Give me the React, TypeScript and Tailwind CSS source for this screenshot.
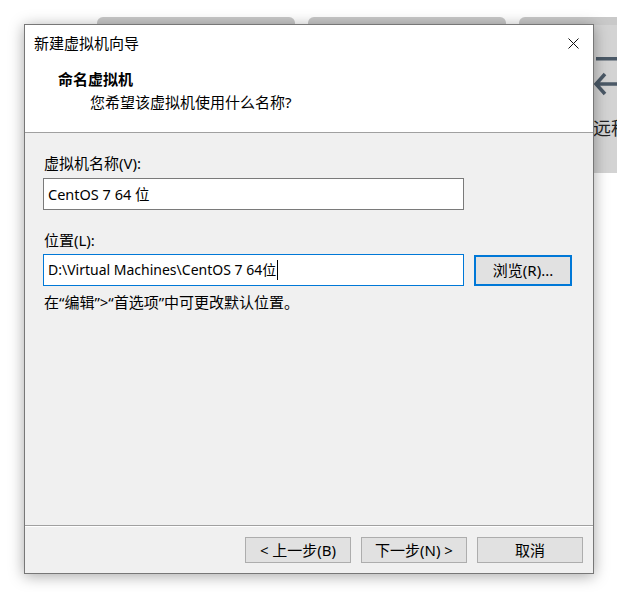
import React from "react";

const font = "font-['Noto_Sans','Noto_Sans_CJK_SC',sans-serif]";

function Btn({ children, className = "" }: { children: React.ReactNode; className?: string }) {
  return (
    <div
      className={`flex h-[26px] w-[106px] items-center justify-center border border-[#adadad] bg-[#e1e1e1] text-[15px] leading-none text-black ${className}`}
    >
      {children}
    </div>
  );
}

export default function App() {
  return (
    <div className={`relative h-[592px] w-[617px] overflow-hidden bg-white ${font}`}>
      {/* background app */}
      <div className="flex flex-col">
        <div className="flex gap-[13px] pl-[97px] pt-[17px]">
          <div className="h-[8px] w-[198px] shrink-0 rounded-t-[6px] bg-[#c9c9c9]" />
          <div className="h-[8px] w-[198px] shrink-0 rounded-t-[6px] bg-[#c9c9c9]" />
          <div className="h-[8px] w-[198px] shrink-0 rounded-t-[6px] bg-[#c9c9c9]" />
        </div>
        <div className="ml-auto flex h-[148px] w-[300px] flex-col items-end bg-[#d3d3d3]">
          <div className="flex w-[26px] flex-col pt-[24px]">
            <svg width="26" height="50" viewBox="0 0 26 50" className="text-[#4b5967]">
              <rect x="5" y="8" width="22" height="3.5" fill="currentColor" />
              <path d="M5 35 L26 35 M14 25 L5 35 L14 45" stroke="currentColor" strokeWidth="3.5" fill="none" />
            </svg>
            <div className="ml-[2px] mt-[20px] whitespace-nowrap text-[18px] leading-none text-[#222]">远程</div>
          </div>
        </div>
      </div>

      {/* dialog */}
      <div className="absolute left-[24px] top-[24px] flex h-[550px] w-[570px] flex-col border border-[#777777] bg-[#f0f0f0] shadow-[0_2px_14px_rgba(0,0,0,0.35)]">
        <div className="flex h-[36px] items-center justify-between bg-white pl-[9px] pr-[14px]">
          <span className="text-[15px] leading-none text-black">新建虚拟机向导</span>
          <svg width="11" height="11" viewBox="0 0 11 11">
            <path d="M0.5 0.5 L10.5 10.5 M10.5 0.5 L0.5 10.5" stroke="#111" strokeWidth="1" />
          </svg>
        </div>
        <div className="flex h-[72px] flex-col border-b border-[#a0a0a0] bg-white pl-[33px] pt-[8px]">
          <div className="text-[15px] font-bold leading-[20px] text-black">命名虚拟机</div>
          <div className="mt-[3px] pl-[32px] text-[15px] leading-[20px] text-black">您希望该虚拟机使用什么名称?</div>
        </div>
        <div className="flex flex-1 flex-col px-[18px] pt-[20px] text-[15px] text-black">
          <div className="pl-[1px] leading-[20px]">虚拟机名称(V):</div>
          <div className="mt-[5px] flex h-[32px] w-[421px] items-center border border-[#7a7a7a] bg-white pl-[4px] text-[14.5px] leading-none">
            CentOS 7 64 位
          </div>
          <div className="mt-[20px] pl-[1px] leading-[20px]">位置(L):</div>
          <div className="mt-[4px] flex items-center gap-[10px]">
            <div className="flex h-[32px] w-[421px] items-center border border-[#0078d7] bg-white pl-[4px] text-[14px] leading-none">
              <span>D:\Virtual Machines\CentOS 7 64位</span>
              <span className="ml-[1px] h-[20px] w-px bg-black" />
            </div>
            <div className="flex h-[31px] w-[98px] items-center justify-center border-2 border-[#0078d7] bg-[#e1e1e1] leading-none">
              浏览(R)...
            </div>
          </div>
          <div className="mt-[6px] pl-[1px] leading-[20px]">在“编辑”&gt;“首选项”中可更改默认位置。</div>
        </div>
        <div className="h-px bg-[#a0a0a0]" />
        <div className="h-px bg-white" />
        <div className="flex h-[46px] items-center justify-end gap-[10px] pr-[10px]">
          <Btn>&lt; 上一步(B)</Btn>
          <Btn>下一步(N) &gt;</Btn>
          <Btn>取消</Btn>
        </div>
      </div>
    </div>
  );
}
